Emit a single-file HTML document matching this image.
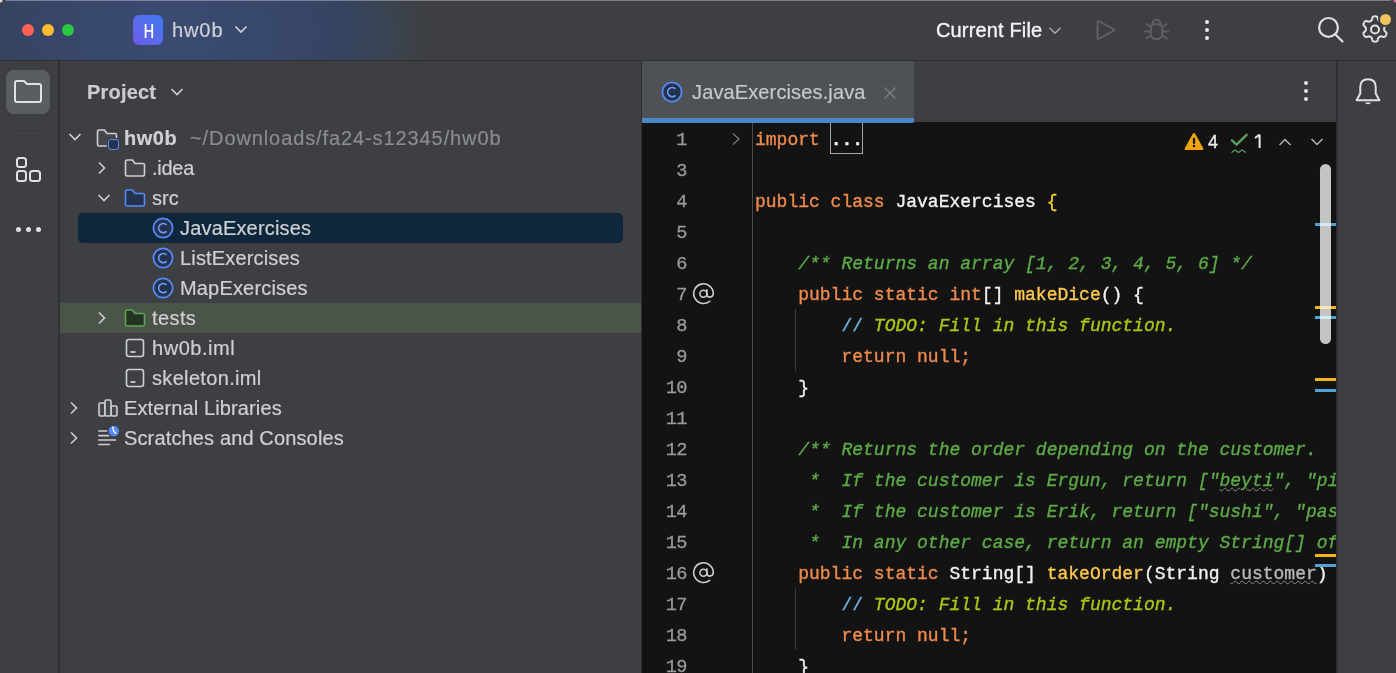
<!DOCTYPE html>
<html><head><meta charset="utf-8">
<style>
*{box-sizing:border-box}
html,body{margin:0;padding:0}
body{width:1396px;height:673px;overflow:hidden;position:relative;background:#3d3f42;font-family:"Liberation Sans",sans-serif;color:#dfe1e5}
.abs{position:absolute}
.t,.code,.ln{will-change:transform}
#title{position:absolute;left:0;top:0;width:1396px;height:60px;background:radial-gradient(ellipse 290px 200px at 175px 32px,#3a4a72 0%,#38486c 30%,#374667 45%,#36445f 60%,#3a4554 72%,#3d4147 82%,#3d3f42 88%)}
#tb{position:absolute;left:0;top:60px;width:1396px;height:1px;background:#2e2f31}
#lstrip{position:absolute;left:0;top:61px;width:58px;height:612px;background:#3d3f42}
#lborder{position:absolute;left:58px;top:61px;width:2px;height:612px;background:#303133}
#proj{position:absolute;left:60px;top:61px;width:581px;height:612px;background:#3d3f42}
#pborder{position:absolute;left:641px;top:61px;width:1px;height:612px;background:#2e2f31}
#tabbar{position:absolute;left:642px;top:61px;width:694px;height:61px;background:#3d3f42}
#editor{position:absolute;left:642px;top:122px;width:694px;height:551px;background:#131313;overflow:hidden}
#rborder{position:absolute;left:1336px;top:61px;width:2px;height:612px;background:#2e2f31}
#rstrip{position:absolute;left:1338px;top:61px;width:58px;height:612px;background:#3d3f42}
.t{position:absolute;white-space:nowrap;font-size:20px;line-height:24px;-webkit-text-stroke:0.2px currentColor}
.code{position:absolute;left:113px;-webkit-text-stroke:0.35px currentColor;font-family:"Liberation Mono",monospace;font-size:18px;line-height:31px;white-space:pre;color:#f2f2f2}
.ln{position:absolute;font-family:"Liberation Mono",monospace;font-size:18.6px;line-height:31px;color:#9a9a9a;text-align:right;width:60px;left:0;letter-spacing:-0.5px;-webkit-text-stroke:0.3px currentColor}
.kw{color:#ee8b4c}
.doc{color:#5caa46;font-style:italic}
.todo{color:#abc614;font-style:italic}
.fn{color:#fdc94e}
.cm{color:#6cb2e0}
.fold{font-weight:bold;color:#f0f0f0}
.typo{text-decoration:underline wavy #8a8a8a 1px}
.typo2{color:#b9b9b9;text-decoration:underline wavy #8a8a8a 1px}
</style></head>
<body>
<div id="title"></div>

<div class="abs" style="left:22px;top:24px;width:12px;height:12px;border-radius:50%;background:#fe5f57"></div>
<div class="abs" style="left:42px;top:24px;width:12px;height:12px;border-radius:50%;background:#febc2e"></div>
<div class="abs" style="left:62px;top:24px;width:12px;height:12px;border-radius:50%;background:#28c840"></div>
<div class="abs" style="left:133px;top:15px;width:30px;height:30px;border-radius:6px;background:linear-gradient(45deg,#6d5ae6 0%,#5a6cec 50%,#3f78ef 100%);"></div>
<svg class="abs" style="left:133px;top:15px" width="30" height="30" viewBox="0 0 30 30"><path d="M12.6 9 V23 M19.2 9 V23 M12.6 15.8 H19.2" fill="none" stroke="#ffffff" stroke-width="1.8"/></svg>
<div class="t" style="left:172px;top:18px;color:#cfd1d5;letter-spacing:0.9px">hw0b</div>
<svg class="abs" style="left:234px;top:24px" width="14" height="10" viewBox="0 0 14 10"><path d="M1.5 2.5 L7 8 L12.5 2.5" fill="none" stroke="#cfd1d5" stroke-width="1.6"/></svg>
<div class="t" style="left:936px;top:18px;color:#f4f5f7;letter-spacing:0.15px;-webkit-text-stroke:0.35px #f4f5f7">Current File</div>
<svg class="abs" style="left:1048px;top:25px" width="14" height="10" viewBox="0 0 14 10"><path d="M1.5 2.8 L7 8.2 L12.5 2.8" fill="none" stroke="#a9abaf" stroke-width="1.5"/></svg>
<svg class="abs" style="left:1094px;top:18px" width="24" height="24" viewBox="0 0 24 24"><path d="M3.5 4.2 Q3.5 2.5 5 3.3 L19.8 11.2 Q21.2 12 19.8 12.8 L5 20.7 Q3.5 21.5 3.5 19.8 Z" fill="none" stroke="#5e6064" stroke-width="2" stroke-linejoin="round"/></svg>
<svg class="abs" style="left:1144px;top:18px" width="25" height="24" viewBox="0 0 25 24"><g fill="none" stroke="#5e6064" stroke-width="1.9" stroke-linecap="round"><path d="M8.6 6.3 Q8.6 1.6 12.5 1.6 Q16.4 1.6 16.4 6.3"/><path d="M6.8 10.5 Q6.8 6.3 11 6.3 H14 Q18.2 6.3 18.2 10.5 V15.5 Q18.2 21.2 12.5 21.2 Q6.8 21.2 6.8 15.5 Z"/><path d="M2.2 6 L6.8 8.8 M0.8 13.5 H6.8 M2.2 20.5 L6.8 17.6 M22.8 6 L18.2 8.8 M24.2 13.5 H18.2 M22.8 20.5 L18.2 17.6"/></g></svg>
<div class="abs" style="left:1205px;top:20px;width:4px;height:4px;border-radius:50%;background:#e8eaee"></div>
<div class="abs" style="left:1205px;top:28px;width:4px;height:4px;border-radius:50%;background:#e8eaee"></div>
<div class="abs" style="left:1205px;top:36px;width:4px;height:4px;border-radius:50%;background:#e8eaee"></div>
<svg class="abs" style="left:1316px;top:15px" width="30" height="30" viewBox="0 0 30 30"><g fill="none" stroke="#dfe1e5" stroke-width="2.2"><circle cx="12.5" cy="12.4" r="9.4"/><path d="M19.2 19.2 L26.5 26.5" stroke-linecap="round"/></g></svg>
<svg class="abs" style="left:1360px;top:14px" width="30" height="30" viewBox="0 0 30 30"><g fill="none" stroke="#dfe1e5" stroke-width="2"><circle cx="15" cy="15.5" r="4"/><path d="M15.00 2.35 L15.55 2.37 L16.10 2.44 L16.63 2.59 L17.13 2.90 L17.55 3.51 L17.82 4.47 L18.02 5.43 L18.26 6.06 L18.55 6.42 L18.89 6.67 L19.23 6.88 L19.57 7.08 L19.92 7.28 L20.27 7.47 L20.65 7.63 L21.12 7.71 L21.78 7.60 L22.71 7.29 L23.67 7.05 L24.41 7.10 L24.93 7.38 L25.33 7.77 L25.66 8.21 L25.96 8.67 L26.21 9.16 L26.42 9.67 L26.56 10.21 L26.54 10.80 L26.22 11.46 L25.53 12.18 L24.80 12.83 L24.37 13.35 L24.21 13.79 L24.16 14.20 L24.15 14.60 L24.15 15.00 L24.15 15.40 L24.16 15.80 L24.21 16.21 L24.37 16.65 L24.80 17.17 L25.53 17.82 L26.22 18.54 L26.54 19.20 L26.56 19.79 L26.42 20.33 L26.21 20.84 L25.96 21.32 L25.66 21.79 L25.33 22.23 L24.93 22.62 L24.41 22.90 L23.67 22.95 L22.71 22.71 L21.78 22.40 L21.12 22.29 L20.65 22.37 L20.27 22.53 L19.92 22.72 L19.58 22.92 L19.23 23.12 L18.89 23.33 L18.55 23.58 L18.26 23.94 L18.02 24.57 L17.82 25.53 L17.55 26.49 L17.13 27.10 L16.63 27.41 L16.10 27.56 L15.55 27.63 L15.00 27.65 L14.45 27.63 L13.90 27.56 L13.37 27.41 L12.87 27.10 L12.45 26.49 L12.18 25.53 L11.98 24.57 L11.74 23.94 L11.45 23.58 L11.11 23.33 L10.77 23.12 L10.42 22.92 L10.08 22.72 L9.73 22.53 L9.35 22.37 L8.88 22.29 L8.22 22.40 L7.29 22.71 L6.33 22.95 L5.59 22.90 L5.07 22.62 L4.67 22.23 L4.34 21.79 L4.04 21.33 L3.79 20.84 L3.58 20.33 L3.44 19.79 L3.46 19.20 L3.78 18.54 L4.47 17.82 L5.20 17.17 L5.63 16.65 L5.79 16.21 L5.84 15.80 L5.85 15.40 L5.85 15.00 L5.85 14.60 L5.84 14.20 L5.79 13.79 L5.63 13.35 L5.20 12.83 L4.47 12.18 L3.78 11.46 L3.46 10.80 L3.44 10.21 L3.58 9.67 L3.79 9.16 L4.04 8.68 L4.34 8.21 L4.67 7.77 L5.07 7.38 L5.59 7.10 L6.33 7.05 L7.29 7.29 L8.22 7.60 L8.88 7.71 L9.35 7.63 L9.73 7.47 L10.08 7.28 L10.43 7.08 L10.77 6.88 L11.11 6.67 L11.45 6.42 L11.74 6.06 L11.98 5.43 L12.18 4.47 L12.45 3.51 L12.87 2.90 L13.37 2.59 L13.90 2.44 L14.45 2.37 Z" stroke-linejoin="round"/></g></svg>
<div class="abs" style="left:1377.5px;top:12px;width:15px;height:15px;border-radius:50%;background:#f2c55c;border:2px solid #3d3f42"></div>
<div class="abs" style="left:0;top:0;width:1396px;height:1px;background:rgba(200,205,215,0.45)"></div>
<div id="tb"></div>
<div id="lstrip"></div>
<div id="lborder"></div>
<div id="proj"></div>
<div id="pborder"></div>
<div id="tabbar"></div>
<div id="editor">
<div class="abs" style="left:110px;top:0;width:1px;height:551px;background:#4a4a4a"></div>
<svg class="abs" style="left:89px;top:9px" width="10" height="16" viewBox="0 0 10 16"><path d="M2 2.5 L8 8 L2 13.5" fill="none" stroke="#76787c" stroke-width="1.3"/></svg>
<div class="abs" style="left:188px;top:0px;width:33px;height:32px;border:1.5px solid #a5a5a5;border-top:none"></div>
<div class="ln" style="top:3px;left:-15px">1</div>
<div class="ln" style="top:34px;left:-15px">3</div>
<div class="ln" style="top:65px;left:-15px">4</div>
<div class="ln" style="top:96px;left:-15px">5</div>
<div class="ln" style="top:127px;left:-15px">6</div>
<div class="ln" style="top:158px;left:-15px">7</div>
<div class="ln" style="top:189px;left:-15px">8</div>
<div class="ln" style="top:220px;left:-15px">9</div>
<div class="ln" style="top:251px;left:-15px">10</div>
<div class="ln" style="top:282px;left:-15px">11</div>
<div class="ln" style="top:313px;left:-15px">12</div>
<div class="ln" style="top:344px;left:-15px">13</div>
<div class="ln" style="top:375px;left:-15px">14</div>
<div class="ln" style="top:406px;left:-15px">15</div>
<div class="ln" style="top:437px;left:-15px">16</div>
<div class="ln" style="top:468px;left:-15px">17</div>
<div class="ln" style="top:499px;left:-15px">18</div>
<div class="ln" style="top:530px;left:-15px">19</div>

<svg class="abs" style="left:50px;top:160px" width="24" height="24" viewBox="0 0 24 24"><g fill="none" stroke="#cfcfcf" stroke-width="1.6" stroke-linecap="round"><circle cx="11.4" cy="11.7" r="3.5"/><path d="M14.9 7.8 V12.6 Q14.9 15.1 17.4 15.1 Q21.3 15.1 21.3 11.3 A9.8 9.8 0 1 0 17.6 19.3"/></g></svg>
<svg class="abs" style="left:50px;top:439px" width="24" height="24" viewBox="0 0 24 24"><g fill="none" stroke="#cfcfcf" stroke-width="1.6" stroke-linecap="round"><circle cx="11.4" cy="11.7" r="3.5"/><path d="M14.9 7.8 V12.6 Q14.9 15.1 17.4 15.1 Q21.3 15.1 21.3 11.3 A9.8 9.8 0 1 0 17.6 19.3"/></g></svg>
<div class="abs" style="left:153px;top:187px;width:1px;height:62px;background:#3b3b3b"></div>
<div class="abs" style="left:153px;top:466px;width:1px;height:62px;background:#3b3b3b"></div>
<div class="code" style="top:3px"><span class="kw">import</span> <span class="fold">...</span></div>
<div class="code" style="top:34px"></div>
<div class="code" style="top:65px"><span class="kw">public class</span> JavaExercises <span style="color:#f0d030">{</span></div>
<div class="code" style="top:96px"></div>
<div class="code" style="top:127px">    <span class="doc">/** Returns an array [1, 2, 3, 4, 5, 6] */</span></div>
<div class="code" style="top:158px">    <span class="kw">public static int</span>[] <span class="fn">makeDice</span>() {</div>
<div class="code" style="top:189px">        <span class="cm">//</span> <span class="todo">TODO: Fill in this function.</span></div>
<div class="code" style="top:220px">        <span class="kw">return null;</span></div>
<div class="code" style="top:251px">    }</div>
<div class="code" style="top:282px"></div>
<div class="code" style="top:313px">    <span class="doc">/** Returns the order depending on the customer.</span></div>
<div class="code" style="top:344px">    <span class="doc"> *  If the customer is Ergun, return ["<span class="typo">beyti</span>", "pizza", "hummus"]</span></div>
<div class="code" style="top:375px">    <span class="doc"> *  If the customer is Erik, return ["sushi", "pasta", "avocado"]</span></div>
<div class="code" style="top:406px">    <span class="doc"> *  In any other case, return an empty String[] of size 3. */</span></div>
<div class="code" style="top:437px">    <span class="kw">public static</span> String[] <span class="fn">takeOrder</span>(String <span class="typo2">customer</span>) {</div>
<div class="code" style="top:468px">        <span class="cm">//</span> <span class="todo">TODO: Fill in this function.</span></div>
<div class="code" style="top:499px">        <span class="kw">return null;</span></div>
<div class="code" style="top:530px">    }</div>

</div>
<div class="abs" style="left:642px;top:61px;width:272px;height:57px;background:#4e5155"></div>
<div class="abs" style="left:642px;top:118px;width:272px;height:5px;background:#4a88c7;border-bottom-right-radius:2px"></div>
<svg class="abs" style="left:661px;top:81px" width="22" height="22" viewBox="0 0 22 22"><circle cx="11" cy="11" r="9.6" fill="#243250" stroke="#548af7" stroke-width="1.8"/><path d="M14.5 7.9 A4.6 4.6 0 1 0 14.5 14.4" fill="none" stroke="#6b9ef9" stroke-width="1.5"/></svg>
<div class="t" style="left:692px;top:80px;color:#c6c7c9;letter-spacing:0.13px">JavaExercises.java</div>
<svg class="abs" style="left:883px;top:86px" width="14" height="14" viewBox="0 0 14 14"><path d="M1.5 1.5 L12.5 12.5 M12.5 1.5 L1.5 12.5" stroke="#7c7e82" stroke-width="1.35"/></svg>
<div class="abs" style="left:1304px;top:81px;width:4px;height:4px;border-radius:50%;background:#dfe1e5"></div>
<div class="abs" style="left:1304px;top:89px;width:4px;height:4px;border-radius:50%;background:#dfe1e5"></div>
<div class="abs" style="left:1304px;top:97px;width:4px;height:4px;border-radius:50%;background:#dfe1e5"></div>



<div class="abs" style="left:6px;top:70px;width:44px;height:44px;border-radius:8px;background:#5a5d61"></div>
<svg class="abs" style="left:13px;top:79px" width="30" height="25" viewBox="0 0 30 25"><path d="M2 4 Q2 2 4 2 L11 2 L14 5 L26 5 Q28 5 28 7 L28 21 Q28 23 26 23 L4 23 Q2 23 2 21 Z" fill="none" stroke="#dfe1e5" stroke-width="2" stroke-linejoin="round"/></svg>
<div class="abs" style="left:10px;top:130px;width:36px;height:2px;background:#393b3f"></div>
<svg class="abs" style="left:15px;top:156px" width="27" height="27" viewBox="0 0 27 27"><g fill="none" stroke="#dfe1e5" stroke-width="2"><rect x="2" y="2" width="9" height="9" rx="2.5"/><rect x="2" y="15" width="9" height="10" rx="2.5"/><rect x="15" y="15" width="10" height="10" rx="2.5"/></g></svg>
<div class="abs" style="left:16px;top:227px;width:5px;height:5px;border-radius:50%;background:#dfe1e5"></div>
<div class="abs" style="left:26px;top:227px;width:5px;height:5px;border-radius:50%;background:#dfe1e5"></div>
<div class="abs" style="left:36px;top:227px;width:5px;height:5px;border-radius:50%;background:#dfe1e5"></div>

<div class="t" style="left:87px;top:80px;font-weight:bold;color:#cbccce;letter-spacing:0.2px">Project</div>
<svg class="abs" style="left:170px;top:87px" width="14" height="10" viewBox="0 0 14 10"><path d="M1.5 2 L7 7.5 L12.5 2" fill="none" stroke="#ced0d6" stroke-width="1.6"/></svg>
<div class="abs" style="left:60px;top:303px;width:581px;height:30px;background:#4a5449"></div>
<div class="abs" style="left:78px;top:213px;width:545px;height:30px;border-radius:5px;background:#0f273d"></div>
<svg class="abs" style="left:68px;top:132px" width="14" height="10" viewBox="0 0 14 10"><path d="M1.5 2 L7 7.5 L12.5 2" fill="none" stroke="#ced0d6" stroke-width="1.6"/></svg>
<svg class="abs" style="left:96px;top:129px" width="22" height="18" viewBox="0 0 22 18"><path d="M1.5 2.5 Q1.5 1 3 1 L8.5 1 L11 4.5 L19 4.5 Q20.5 4.5 20.5 6 L20.5 15.5 Q20.5 17 19 17 L3 17 Q1.5 17 1.5 15.5 Z" fill="#45474b" stroke="#ced0d6" stroke-width="1.6" stroke-linejoin="round"/></svg>
<div class="abs" style="left:108px;top:139px;width:11px;height:11px;border-radius:3px;background:#263350;border:1.6px solid #548af7;box-shadow:0 0 0 1.2px #3d3f42"></div>
<div class="t" style="left:124px;top:126px;color:#cfd0d2;font-weight:bold;letter-spacing:0.5px">hw0b</div>
<div class="t" style="left:190px;top:126px;color:#8a8c90;letter-spacing:0.9px">~/Downloads/fa24-s12345/hw0b</div>
<svg class="abs" style="left:97px;top:161px" width="10" height="14" viewBox="0 0 10 14"><path d="M2 1.5 L7.5 7 L2 12.5" fill="none" stroke="#ced0d6" stroke-width="1.6"/></svg>
<svg class="abs" style="left:124px;top:159px" width="22" height="18" viewBox="0 0 22 18"><path d="M1.5 2.5 Q1.5 1 3 1 L8.5 1 L11 4.5 L19 4.5 Q20.5 4.5 20.5 6 L20.5 15.5 Q20.5 17 19 17 L3 17 Q1.5 17 1.5 15.5 Z" fill="#45474b" stroke="#ced0d6" stroke-width="1.6" stroke-linejoin="round"/></svg>
<div class="t" style="left:152px;top:156px;color:#cfd0d3;letter-spacing:-0.25px">.idea</div>
<svg class="abs" style="left:97px;top:193px" width="14" height="10" viewBox="0 0 14 10"><path d="M1.5 2 L7 7.5 L12.5 2" fill="none" stroke="#ced0d6" stroke-width="1.6"/></svg>
<svg class="abs" style="left:124px;top:189px" width="22" height="18" viewBox="0 0 22 18"><path d="M1.5 2.5 Q1.5 1 3 1 L8.5 1 L11 4.5 L19 4.5 Q20.5 4.5 20.5 6 L20.5 15.5 Q20.5 17 19 17 L3 17 Q1.5 17 1.5 15.5 Z" fill="#25324d" stroke="#548af7" stroke-width="1.6" stroke-linejoin="round"/></svg>
<div class="t" style="left:152px;top:186px;color:#cfd0d3;">src</div>
<svg class="abs" style="left:152px;top:217px" width="22" height="22" viewBox="0 0 22 22"><circle cx="11" cy="11" r="9.6" fill="#243250" stroke="#548af7" stroke-width="1.8"/><path d="M14.5 7.9 A4.6 4.6 0 1 0 14.5 14.4" fill="none" stroke="#6b9ef9" stroke-width="1.5"/></svg>
<div class="t" style="left:180px;top:216px;color:#cfd0d3;letter-spacing:0.17px">JavaExercises</div>
<svg class="abs" style="left:152px;top:247px" width="22" height="22" viewBox="0 0 22 22"><circle cx="11" cy="11" r="9.6" fill="#243250" stroke="#548af7" stroke-width="1.8"/><path d="M14.5 7.9 A4.6 4.6 0 1 0 14.5 14.4" fill="none" stroke="#6b9ef9" stroke-width="1.5"/></svg>
<div class="t" style="left:180px;top:246px;color:#cfd0d3;letter-spacing:0.16px">ListExercises</div>
<svg class="abs" style="left:152px;top:277px" width="22" height="22" viewBox="0 0 22 22"><circle cx="11" cy="11" r="9.6" fill="#243250" stroke="#548af7" stroke-width="1.8"/><path d="M14.5 7.9 A4.6 4.6 0 1 0 14.5 14.4" fill="none" stroke="#6b9ef9" stroke-width="1.5"/></svg>
<div class="t" style="left:180px;top:276px;color:#cfd0d3;letter-spacing:0.17px">MapExercises</div>
<svg class="abs" style="left:97px;top:311px" width="10" height="14" viewBox="0 0 10 14"><path d="M2 1.5 L7.5 7 L2 12.5" fill="none" stroke="#ced0d6" stroke-width="1.6"/></svg>
<svg class="abs" style="left:124px;top:309px" width="22" height="18" viewBox="0 0 22 18"><path d="M1.5 2.5 Q1.5 1 3 1 L8.5 1 L11 4.5 L19 4.5 Q20.5 4.5 20.5 6 L20.5 15.5 Q20.5 17 19 17 L3 17 Q1.5 17 1.5 15.5 Z" fill="#243422" stroke="#5fa35a" stroke-width="1.6" stroke-linejoin="round"/></svg>
<div class="t" style="left:152px;top:306px;color:#cfd0d3;letter-spacing:0.4px">tests</div>
<svg class="abs" style="left:125px;top:338px" width="20" height="20" viewBox="0 0 20 20"><rect x="1.5" y="1.5" width="17" height="17" rx="2.5" fill="none" stroke="#ced0d6" stroke-width="1.6"/><path d="M5.5 14 H10.5" stroke="#ced0d6" stroke-width="1.8"/></svg>
<div class="t" style="left:152px;top:336px;color:#cfd0d3;letter-spacing:0.55px">hw0b.iml</div>
<svg class="abs" style="left:125px;top:368px" width="20" height="20" viewBox="0 0 20 20"><rect x="1.5" y="1.5" width="17" height="17" rx="2.5" fill="none" stroke="#ced0d6" stroke-width="1.6"/><path d="M5.5 14 H10.5" stroke="#ced0d6" stroke-width="1.8"/></svg>
<div class="t" style="left:152px;top:366px;color:#cfd0d3;letter-spacing:0.33px">skeleton.iml</div>
<svg class="abs" style="left:69px;top:401px" width="10" height="14" viewBox="0 0 10 14"><path d="M2 1.5 L7.5 7 L2 12.5" fill="none" stroke="#ced0d6" stroke-width="1.6"/></svg>
<svg class="abs" style="left:96px;top:398px" width="24" height="20" viewBox="0 0 24 20"><g fill="#45474b" stroke="#ced0d6" stroke-width="1.6" stroke-linejoin="round"><rect x="3" y="5" width="6" height="13" rx="1.5"/><rect x="15" y="8" width="6" height="10" rx="1.5"/><rect x="9" y="2" width="6" height="16" rx="1.5"/></g></svg>
<div class="t" style="left:124px;top:396px;color:#cfd0d3;letter-spacing:0.12px">External Libraries</div>
<svg class="abs" style="left:69px;top:431px" width="10" height="14" viewBox="0 0 10 14"><path d="M2 1.5 L7.5 7 L2 12.5" fill="none" stroke="#ced0d6" stroke-width="1.6"/></svg>
<svg class="abs" style="left:96px;top:424px" width="26" height="24" viewBox="0 0 26 24"><g stroke="#ced0d6" stroke-width="1.6" stroke-linecap="round"><path d="M2.8 7 H11 M2.8 11.6 H13 M2.8 16 H19.6 M2.8 20.5 H13.5"/></g><circle cx="17.8" cy="7" r="6.4" fill="#3d3f42"/><circle cx="17.8" cy="7" r="5.2" fill="#548af7"/><path d="M16.8 3.2 L17.6 7 L19.6 9.2" fill="none" stroke="#ffffff" stroke-width="1.3" stroke-linecap="round" stroke-linejoin="round"/></svg>
<div class="t" style="left:124px;top:426px;color:#cfd0d3;letter-spacing:0.14px">Scratches and Consoles</div>

<svg class="abs" style="left:1184px;top:132px" width="20" height="19" viewBox="0 0 20 19"><path d="M10 2.2 L18.2 16.8 L1.8 16.8 Z" fill="#f0a30a" stroke="#f0a30a" stroke-width="2.4" stroke-linejoin="round"/><path d="M10 6.8 V11" stroke="#131313" stroke-width="2.2" stroke-linecap="round"/><circle cx="10" cy="14" r="1.25" fill="#131313"/></svg>
<div class="t" style="left:1208px;top:130px;color:#ececec;font-size:18px;-webkit-text-stroke:0.3px #ececec">4</div>
<svg class="abs" style="left:1230px;top:133px" width="19" height="21" viewBox="0 0 19 21"><path d="M2 7.4 L6.5 11.6 L16.6 1.9" fill="none" stroke="#5a9d5a" stroke-width="2.5" stroke-linecap="round"/><path d="M1.5 19.6 L5 17 L8.5 19.6 L12 17 L15.8 19.6" fill="none" stroke="#5a9d5a" stroke-width="1.2"/></svg>
<svg class="abs" style="left:1252px;top:133px" width="12" height="16" viewBox="0 0 12 16"><path d="M7.6 1.6 V15 M7.6 1.6 L3 5" fill="none" stroke="#ececec" stroke-width="2" stroke-linecap="butt" stroke-linejoin="round"/></svg>
<svg class="abs" style="left:1278px;top:137px" width="14" height="10" viewBox="0 0 14 10"><path d="M1.5 8 L7 2.5 L12.5 8" fill="none" stroke="#b4b4b4" stroke-width="1.5"/></svg>
<svg class="abs" style="left:1310px;top:137px" width="14" height="10" viewBox="0 0 14 10"><path d="M1.5 2 L7 7.5 L12.5 2" fill="none" stroke="#b4b4b4" stroke-width="1.5"/></svg>
<div class="abs" style="left:1320px;top:164px;width:11px;height:180px;border-radius:6px;background:#c4c4c4"></div>
<div class="abs" style="left:1315px;top:223px;width:21px;height:3px;background:#4fa3d6"></div>
<div class="abs" style="left:1320px;top:223px;width:11px;height:3px;background:#d6e8f4"></div>
<div class="abs" style="left:1315px;top:306px;width:21px;height:3px;background:#f2b51d"></div>
<div class="abs" style="left:1320px;top:306px;width:11px;height:3px;background:#f6e6b9"></div>
<div class="abs" style="left:1315px;top:316px;width:21px;height:3px;background:#4fa3d6"></div>
<div class="abs" style="left:1320px;top:316px;width:11px;height:3px;background:#d6e8f4"></div>
<div class="abs" style="left:1315px;top:378px;width:21px;height:3px;background:#f2b51d"></div>
<div class="abs" style="left:1315px;top:389px;width:21px;height:3px;background:#4fa3d6"></div>
<div class="abs" style="left:1315px;top:554px;width:21px;height:3px;background:#f2b51d"></div>
<div class="abs" style="left:1315px;top:564px;width:21px;height:3px;background:#4fa3d6"></div>
<div id="rborder"></div>
<div id="rstrip"></div>
<svg class="abs" style="left:1354px;top:77px" width="28" height="30" viewBox="0 0 28 30"><path d="M14 2.2 Q6.3 2.2 6.3 10 V16.4 L2.6 23.2 H25.4 L21.7 16.4 V10 Q21.7 2.2 14 2.2 Z" fill="none" stroke="#dfe1e5" stroke-width="2" stroke-linejoin="round"/><path d="M10.8 25.4 Q14 29.2 17.2 25.4 Z" fill="#dfe1e5"/></svg>
<svg class="abs" style="left:0;top:0" width="8" height="8" viewBox="0 0 8 8"><path d="M0 0 H7 Q1.5 0.8 0.8 6.5 V0 Z" fill="#3a3a3a"/><circle cx="0.8" cy="0.8" r="1.8" fill="#d8d8d8"/></svg>
<svg class="abs" style="left:1388px;top:0" width="8" height="8" viewBox="0 0 8 8"><path d="M8 0 H1 Q6.5 0.8 7.2 6.5 V0 Z" fill="#5a3040"/><circle cx="7.2" cy="1" r="1.6" fill="#d070a0"/></svg>
</body></html>
